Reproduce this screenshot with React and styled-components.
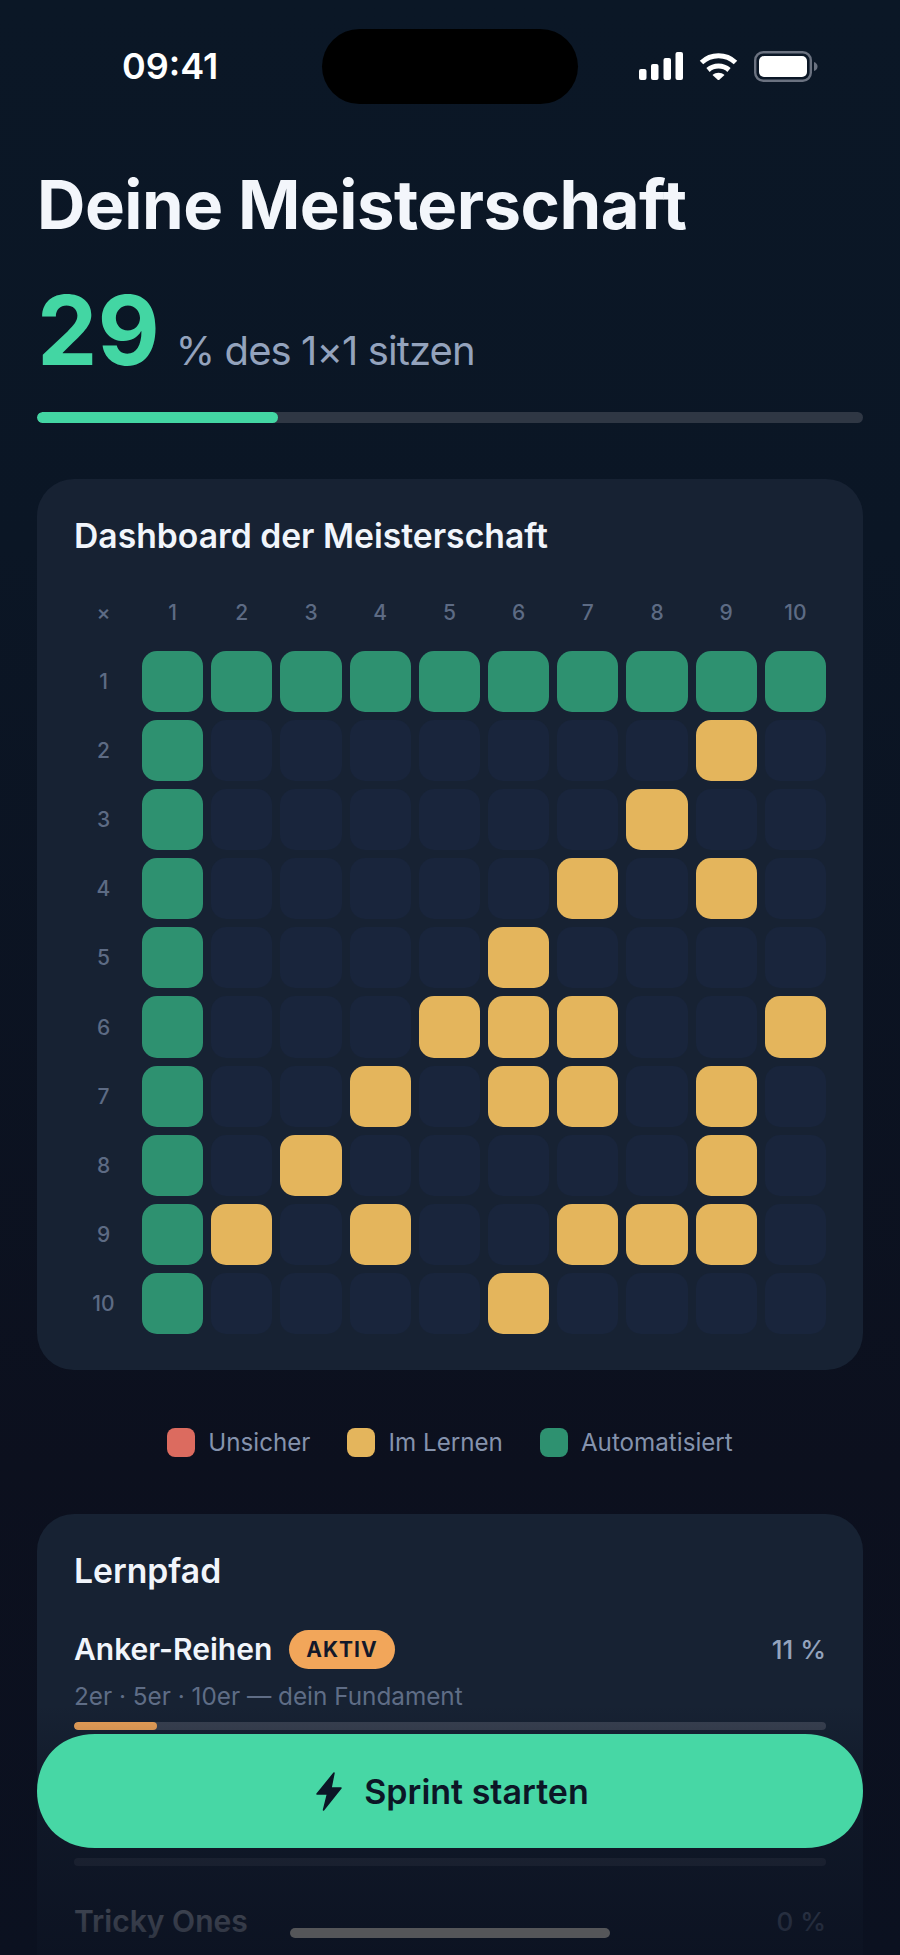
import React from 'react'
import styled, { createGlobalStyle } from 'styled-components'

const GlobalStyle = createGlobalStyle`
  html, body { margin: 0; padding: 0; background: #0b1220; }
  * { box-sizing: border-box; }
  body { font-family: Inter, "Noto Sans", sans-serif; -webkit-font-smoothing: antialiased; }
`

const Screen = styled.div`
  position: relative;
  width: 900px;
  height: 1955px;
  overflow: hidden;
  background: linear-gradient(180deg, #0b1726 0%, #0b1625 28%, #0c101e 75%, #0b1120 100%);
`

const StatusBar = styled.div`
  display: grid;
  grid-template-columns: 1fr 256px 1fr;
  height: 166px;
  padding-top: 29px;
`

const Time = styled.div`
  font-size: 36px;
  font-weight: 600;
  line-height: 75px;
  color: #fff;
  padding-left: 122px;
`

const Island = styled.div`
  height: 75px;
  border-radius: 38px;
  background: #000;
`

const StatusIcons = styled.div`
  display: flex;
  align-items: flex-start;
  height: 53px;
  padding: 22px 0 0 61px;
  gap: 16px;
`

const Signal = styled.svg`
  width: 44px;
  height: 28px;
  margin-top: 1px;
`

const Wifi = styled.svg`
  width: 39px;
  height: 28px;
  margin-top: 1px;
`

const Battery = styled.svg`
  width: 64px;
  height: 31px;
`

const Main = styled.main`
  padding: 0 37px;
`

const Title = styled.h1`
  margin: 0 0 38px;
  font-size: 67px;
  line-height: 78px;
  font-weight: 700;
  letter-spacing: -0.5px;
  color: #f3f6fb;
`

const Hero = styled.div`
  display: flex;
  align-items: baseline;
  gap: 16px;
  height: 96px;
  margin-bottom: 34px;
`

const HeroNumber = styled.span`
  font-size: 96px;
  line-height: 96px;
  font-weight: 700;
  color: #43d6a3;
`

const HeroText = styled.span`
  font-size: 40px;
  font-weight: 400;
  letter-spacing: -0.9px;
  color: #94a3bd;
`

const Track = styled.div`
  height: ${({ $h }) => $h}px;
  border-radius: 6px;
  background: ${({ $bg }) => $bg};
  overflow: hidden;
`

const Fill = styled.div`
  height: 100%;
  border-radius: 6px;
  background: ${({ $color }) => $color};
`

const OverallTrack = styled(Track)`
  margin-bottom: 56px;
`

const Card = styled.section`
  border-radius: 37px;
  background: #172233;
  padding: 37px 37px 36px;
`

const CardTitle = styled.h2`
  margin: 0;
  font-size: 33.7px;
  line-height: 40px;
  font-weight: 600;
  color: #f1f5fb;
`

const Matrix = styled.div`
  display: grid;
  grid-template-columns: 60px repeat(10, 1fr);
  grid-template-rows: 46px repeat(10, 61.1px);
  gap: 8px;
  margin-top: 41px;
`

const Axis = styled.div`
  display: flex;
  align-items: center;
  justify-content: center;
  font-size: 21px;
  font-weight: 500;
  color: #5d6b84;
  padding-right: ${({ $side }) => ($side ? 1 : 0)}px;
  padding-bottom: ${({ $top }) => ($top ? 16 : 0)}px;
`

const cellColors = { g: '#2e9170', y: '#e4b55c', e: '#19253c' }

const Cell = styled.div`
  border-radius: 15px;
  background: ${({ $state }) => cellColors[$state]};
`

const Legend = styled.div`
  display: flex;
  justify-content: center;
  gap: 37px;
  margin: 58px 0 57px;
  height: 29px;
`

const LegendItem = styled.div`
  display: flex;
  align-items: center;
  gap: 13px;
  font-size: 24.2px;
  color: #8593ad;
`

const Swatch = styled.span`
  width: 28px;
  height: 29px;
  border-radius: 8px;
  background: ${({ $color }) => $color};
`

const PathList = styled.div`
  display: flex;
  flex-direction: column;
  margin-top: 39px;
`

const PathItem = styled.div`
  height: 136px;
`

const PathHead = styled.div`
  display: flex;
  align-items: center;
  height: 39px;
  gap: 17px;
`

const PathName = styled.span`
  font-size: 30px;
  font-weight: 600;
  color: #f1f5fb;
`

const Badge = styled.span`
  padding: 0 17px;
  height: 39px;
  line-height: 39px;
  border-radius: 20px;
  background: #f2a65a;
  color: #13192a;
  font-size: 21px;
  font-weight: 700;
  letter-spacing: 1px;
`

const Percent = styled.span`
  margin-left: auto;
  font-size: 26px;
  font-weight: 500;
  color: #94a3bd;
`

const PathSub = styled.div`
  margin: 11px 0 10px;
  height: 32px;
  line-height: 32px;
  font-size: 24.3px;
  color: #5f6d86;
`

const Fade = styled.div`
  position: absolute;
  left: 0;
  right: 0;
  bottom: 0;
  height: 250px;
  background: linear-gradient(180deg, rgba(11, 17, 32, 0) 0%, rgba(11, 17, 32, 0.6) 45%, rgba(11, 17, 32, 0.88) 100%);
  pointer-events: none;
`

const SprintButton = styled.button`
  position: absolute;
  left: 37px;
  right: 37px;
  top: 1734px;
  height: 114px;
  border: 0;
  padding: 0 0 0 5px;
  background: #47d7a5;
  clip-path: path("M58 0H768C806 0 826 28 826 57C826 86 806 114 768 114H58C20 114 0 86 0 57C0 28 20 0 58 0Z");
  color: #0c1626;
  display: flex;
  align-items: center;
  justify-content: center;
  gap: 22px;
  font-family: inherit;
  font-size: 34px;
  font-weight: 600;
`

const Bolt = styled.svg`
  width: 26px;
  height: 39px;
`

const HomeBar = styled.div`
  position: absolute;
  left: 290px;
  top: 1928px;
  width: 320px;
  height: 10px;
  border-radius: 5px;
  background: #555659;
`

const rows = [
  'gggggggggg',
  'geeeeeeeye',
  'geeeeeeyee',
  'geeeeeyeye',
  'geeeeyeeee',
  'geeeyyyeey',
  'geeyeyyeye',
  'geyeeeeeye',
  'gyeyeeyyye',
  'geeeeyeeee',
]

const paths = [
  { name: 'Anker-Reihen', active: true, pct: '11 %', sub: '2er · 5er · 10er — dein Fundament', value: 11, color: '#f2a65a' },
  { value: 0 },
  { name: 'Tricky Ones', pct: '0 %', value: 0 },
]

export default function App() {
  return (
    <Screen>
      <GlobalStyle />
      <StatusBar>
        <Time>09:41</Time>
        <Island />
        <StatusIcons>
          <Signal viewBox="0 0 44 28" fill="#fff">
            <rect x="0" y="17" width="7.5" height="11" rx="2" />
            <rect x="12" y="12" width="7.5" height="16" rx="2" />
            <rect x="24.5" y="6" width="7.5" height="22" rx="2" />
            <rect x="36.5" y="0" width="7.5" height="28" rx="2" />
          </Signal>
          <Wifi viewBox="0 0 39 28" fill="none" stroke="#fff" strokeWidth="5">
            <path d="M2.5 10.5C12 1.5 27 1.5 36.5 10.5" />
            <path d="M9 18C15 12.8 24 12.8 30 18" />
            <path d="M13.5 23L19.5 28.5L25.5 23C22 20 17 20 13.5 23Z" fill="#fff" stroke="none" />
          </Wifi>
          <Battery viewBox="0 0 64 31" fill="none">
            <rect x="1.2" y="1.2" width="55.6" height="28.6" rx="8" stroke="#6b7280" strokeWidth="2.4" />
            <rect x="5" y="5" width="48" height="21" rx="5" fill="#fff" />
            <path d="M60 11C62.5 12 63.5 13.5 63.5 15.5C63.5 17.5 62.5 19 60 20Z" fill="#6b7280" />
          </Battery>
        </StatusIcons>
      </StatusBar>

      <Main>
        <Title>Deine Meisterschaft</Title>
        <Hero>
          <HeroNumber>29</HeroNumber>
          <HeroText>% des 1×1 sitzen</HeroText>
        </Hero>
        <OverallTrack $h={11} $bg="#2f3744">
          <Fill $color="#43d6a3" style={{ width: '29.2%' }} />
        </OverallTrack>

        <Card>
          <CardTitle>Dashboard der Meisterschaft</CardTitle>
          <Matrix>
            <Axis $side $top>×</Axis>
            {rows.map((_, i) => (
              <Axis key={i} $top>{i + 1}</Axis>
            ))}
            {rows.map((row, r) => (
              <React.Fragment key={r}>
                <Axis $side>{r + 1}</Axis>
                {row.split('').map((state, c) => (
                  <Cell key={c} $state={state} />
                ))}
              </React.Fragment>
            ))}
          </Matrix>
        </Card>

        <Legend>
          <LegendItem><Swatch $color="#dc6b5f" />Unsicher</LegendItem>
          <LegendItem><Swatch $color="#e4b55c" />Im Lernen</LegendItem>
          <LegendItem><Swatch $color="#2e9170" />Automatisiert</LegendItem>
        </Legend>

        <Card>
          <CardTitle>Lernpfad</CardTitle>
          <PathList>
            {paths.map((p, i) => (
              <PathItem key={i}>
                <PathHead>
                  <PathName>{p.name}</PathName>
                  {p.active && <Badge>AKTIV</Badge>}
                  <Percent>{p.pct}</Percent>
                </PathHead>
                <PathSub>{p.sub}</PathSub>
                <Track $h={8} $bg="#3a4252">
                  <Fill $color={p.color} style={{ width: `${p.value}%` }} />
                </Track>
              </PathItem>
            ))}
          </PathList>
        </Card>
      </Main>

      <Fade />
      <SprintButton>
        <Bolt viewBox="0 0 26 39" fill="currentColor" stroke="currentColor" strokeWidth="1.5" strokeLinejoin="round">
          <path d="M18 1L1 22H11.5L7.5 38L25 16H15Z" />
        </Bolt>
        Sprint starten
      </SprintButton>
      <HomeBar />
    </Screen>
  )
}
